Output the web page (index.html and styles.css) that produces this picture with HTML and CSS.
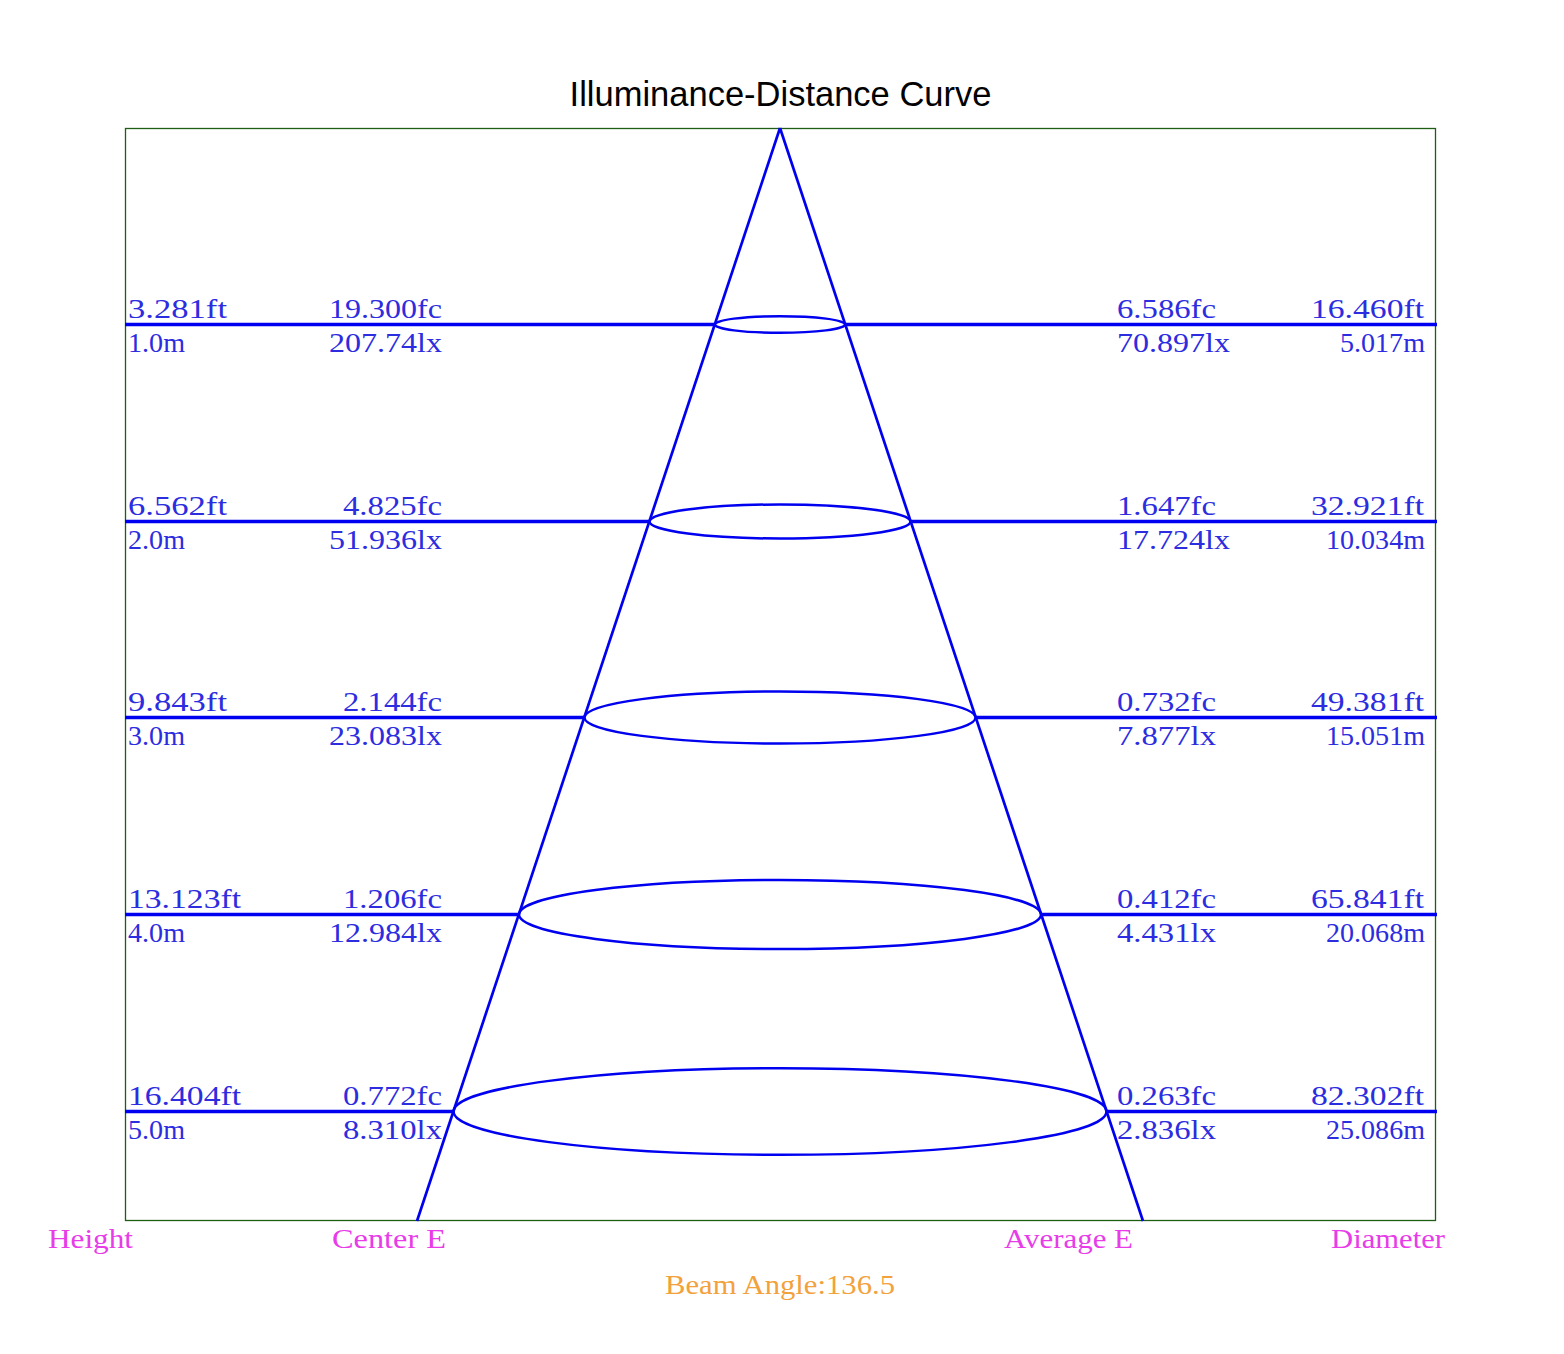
FILE: index.html
```html
<!DOCTYPE html>
<html lang="en">
<head>
<meta charset="utf-8">
<title>Illuminance-Distance Curve</title>
<link rel="stylesheet" href="styles.css">
</head>
<body>
<div class="page">
<svg class="chart" width="1564" height="1354" viewBox="0 0 1564 1354" xmlns="http://www.w3.org/2000/svg">
  <text class="title" x="780.5" y="106">Illuminance-Distance Curve</text>
  <rect class="frame" x="125.5" y="128.5" width="1310" height="1092"/>

  <g class="levels">
    <line class="hline" x1="125" y1="324.5" x2="1437" y2="324.5"/>
    <line class="hline" x1="125" y1="521.5" x2="1437" y2="521.5"/>
    <line class="hline" x1="125" y1="717.5" x2="1437" y2="717.5"/>
    <line class="hline" x1="125" y1="914.5" x2="1437" y2="914.5"/>
    <line class="hline" x1="125" y1="1111.5" x2="1437" y2="1111.5"/>
  </g>

  <g class="cone">
    <ellipse class="ring" cx="780" cy="324.5" rx="65.1" ry="8.3"/>
    <ellipse class="ring" cx="780" cy="521.5" rx="130.5" ry="17"/>
    <ellipse class="ring" cx="780" cy="717.5" rx="195.6" ry="26"/>
    <ellipse class="ring" cx="780" cy="914.5" rx="261" ry="34.5"/>
    <ellipse class="ring" cx="780" cy="1111.5" rx="326.5" ry="43.3"/>
    <line class="cone-line" x1="780" y1="128" x2="417" y2="1221"/>
    <line class="cone-line" x1="780" y1="128" x2="1143" y2="1221"/>
  </g>

  <g class="values">
    <!-- level 1 -->
    <text class="val" x="128" y="318" textLength="99" lengthAdjust="spacingAndGlyphs">3.281ft</text>
    <text class="val" x="128" y="352" textLength="57" lengthAdjust="spacingAndGlyphs">1.0m</text>
    <text class="val end" x="442" y="318" textLength="113" lengthAdjust="spacingAndGlyphs">19.300fc</text>
    <text class="val end" x="442" y="352" textLength="113" lengthAdjust="spacingAndGlyphs">207.74lx</text>
    <text class="val" x="1117" y="318" textLength="99" lengthAdjust="spacingAndGlyphs">6.586fc</text>
    <text class="val" x="1117" y="352" textLength="113" lengthAdjust="spacingAndGlyphs">70.897lx</text>
    <text class="val end" x="1424" y="318" textLength="113" lengthAdjust="spacingAndGlyphs">16.460ft</text>
    <text class="val end" x="1425" y="352" textLength="85" lengthAdjust="spacingAndGlyphs">5.017m</text>

    <!-- level 2 -->
    <text class="val" x="128" y="515" textLength="99" lengthAdjust="spacingAndGlyphs">6.562ft</text>
    <text class="val" x="128" y="549" textLength="57" lengthAdjust="spacingAndGlyphs">2.0m</text>
    <text class="val end" x="442" y="515" textLength="99" lengthAdjust="spacingAndGlyphs">4.825fc</text>
    <text class="val end" x="442" y="549" textLength="113" lengthAdjust="spacingAndGlyphs">51.936lx</text>
    <text class="val" x="1117" y="515" textLength="99" lengthAdjust="spacingAndGlyphs">1.647fc</text>
    <text class="val" x="1117" y="549" textLength="113" lengthAdjust="spacingAndGlyphs">17.724lx</text>
    <text class="val end" x="1424" y="515" textLength="113" lengthAdjust="spacingAndGlyphs">32.921ft</text>
    <text class="val end" x="1425" y="549" textLength="99" lengthAdjust="spacingAndGlyphs">10.034m</text>

    <!-- level 3 -->
    <text class="val" x="128" y="711" textLength="99" lengthAdjust="spacingAndGlyphs">9.843ft</text>
    <text class="val" x="128" y="745" textLength="57" lengthAdjust="spacingAndGlyphs">3.0m</text>
    <text class="val end" x="442" y="711" textLength="99" lengthAdjust="spacingAndGlyphs">2.144fc</text>
    <text class="val end" x="442" y="745" textLength="113" lengthAdjust="spacingAndGlyphs">23.083lx</text>
    <text class="val" x="1117" y="711" textLength="99" lengthAdjust="spacingAndGlyphs">0.732fc</text>
    <text class="val" x="1117" y="745" textLength="99" lengthAdjust="spacingAndGlyphs">7.877lx</text>
    <text class="val end" x="1424" y="711" textLength="113" lengthAdjust="spacingAndGlyphs">49.381ft</text>
    <text class="val end" x="1425" y="745" textLength="99" lengthAdjust="spacingAndGlyphs">15.051m</text>

    <!-- level 4 -->
    <text class="val" x="128" y="908" textLength="113" lengthAdjust="spacingAndGlyphs">13.123ft</text>
    <text class="val" x="128" y="942" textLength="57" lengthAdjust="spacingAndGlyphs">4.0m</text>
    <text class="val end" x="442" y="908" textLength="99" lengthAdjust="spacingAndGlyphs">1.206fc</text>
    <text class="val end" x="442" y="942" textLength="113" lengthAdjust="spacingAndGlyphs">12.984lx</text>
    <text class="val" x="1117" y="908" textLength="99" lengthAdjust="spacingAndGlyphs">0.412fc</text>
    <text class="val" x="1117" y="942" textLength="99" lengthAdjust="spacingAndGlyphs">4.431lx</text>
    <text class="val end" x="1424" y="908" textLength="113" lengthAdjust="spacingAndGlyphs">65.841ft</text>
    <text class="val end" x="1425" y="942" textLength="99" lengthAdjust="spacingAndGlyphs">20.068m</text>

    <!-- level 5 -->
    <text class="val" x="128" y="1105" textLength="113" lengthAdjust="spacingAndGlyphs">16.404ft</text>
    <text class="val" x="128" y="1139" textLength="57" lengthAdjust="spacingAndGlyphs">5.0m</text>
    <text class="val end" x="442" y="1105" textLength="99" lengthAdjust="spacingAndGlyphs">0.772fc</text>
    <text class="val end" x="442" y="1139" textLength="99" lengthAdjust="spacingAndGlyphs">8.310lx</text>
    <text class="val" x="1117" y="1105" textLength="99" lengthAdjust="spacingAndGlyphs">0.263fc</text>
    <text class="val" x="1117" y="1139" textLength="99" lengthAdjust="spacingAndGlyphs">2.836lx</text>
    <text class="val end" x="1424" y="1105" textLength="113" lengthAdjust="spacingAndGlyphs">82.302ft</text>
    <text class="val end" x="1425" y="1139" textLength="99" lengthAdjust="spacingAndGlyphs">25.086m</text>
  </g>

  <g class="axis-labels">
    <text class="axis" x="48" y="1248" textLength="85" lengthAdjust="spacingAndGlyphs">Height</text>
    <text class="axis" x="332" y="1248" textLength="114" lengthAdjust="spacingAndGlyphs">Center E</text>
    <text class="axis" x="1004" y="1248" textLength="129" lengthAdjust="spacingAndGlyphs">Average E</text>
    <text class="axis" x="1331" y="1248" textLength="114" lengthAdjust="spacingAndGlyphs">Diameter</text>
  </g>
  <text class="beam" x="665" y="1294" textLength="230" lengthAdjust="spacingAndGlyphs">Beam Angle:136.5</text>
</svg>
</div>
</body>
</html>
```
FILE: styles.css
```css
html, body {
  margin: 0;
  padding: 0;
  background: #ffffff;
}

.page {
  width: 1564px;
  height: 1354px;
  overflow: hidden;
}

.chart {
  display: block;
}

.title {
  font-family: "Liberation Sans", Arial, sans-serif;
  font-size: 34.5px;
  fill: #000000;
  text-anchor: middle;
}

.frame {
  fill: none;
  stroke: #1d5e12;
  stroke-width: 1.3;
}

.hline {
  stroke: #0000f0;
  stroke-width: 3.6;
}

.cone-line {
  stroke: #0000f0;
  stroke-width: 2.7;
}

.ring {
  fill: #ffffff;
  stroke: #0000f0;
  stroke-width: 2.5;
}

.val {
  font-family: "Liberation Serif", "Times New Roman", serif;
  font-size: 26.5px;
  fill: #2c2ce0;
}

.val.end {
  text-anchor: end;
}

.axis {
  font-family: "Liberation Serif", "Times New Roman", serif;
  font-size: 26.5px;
  fill: #e83ce8;
}

.beam {
  font-family: "Liberation Serif", "Times New Roman", serif;
  font-size: 26.5px;
  fill: #f2a23c;
}
```
